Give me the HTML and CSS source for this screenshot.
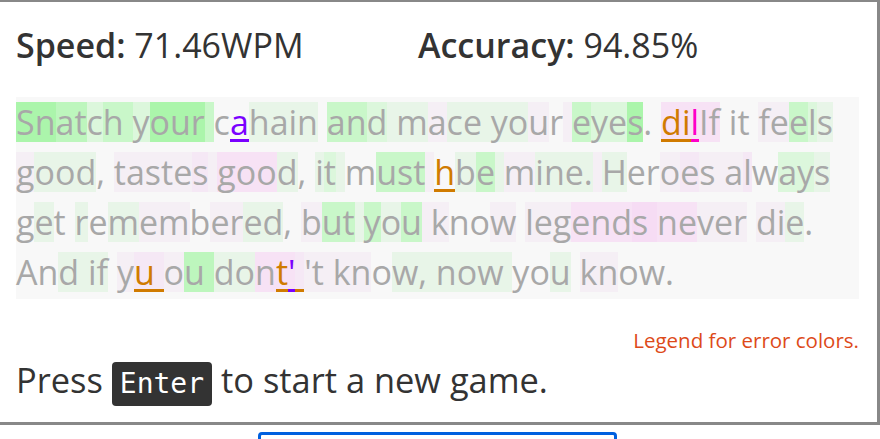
FILE: index.html
```html
<!DOCTYPE html>
<html lang="en">
<head>
<meta charset="utf-8">
<title>Typing game</title>
<link rel="stylesheet" href="styles.css">
</head>
<body>
<div class="frame">
  <div class="stats">
    <div class="stat"><b>Speed:</b> 71.46WPM</div>
    <div class="stat"><b>Accuracy:</b> 94.85%</div>
  </div>
  <div class="t"><span class="g1">Sn</span><span class="g1b">at</span><span class="g3">c</span><span class="g2">h </span><span class="g3">y</span><span class="g1">our</span><span class="g2"> </span>c<span class="e pu">a</span><span class="g4">hain</span> <span class="g2">an</span><span class="g3">d</span><span class="g4"> m</span><span class="p3">a</span><span class="g4">ce yo</span><span class="p3">u</span>r<span class="p3"> </span><span class="g2">e</span><span class="g3">ye</span><span class="g1">s</span>. <span class="e or p1">di</span><span class="e mg p1">l</span><span class="p1">If</span> it <span class="p3">fe</span><span class="g2">e</span><span class="g3">l</span><span class="g4">s</span>
<span class="p3">g</span><span class="g4">ood</span>, <span class="p3">taste</span><span class="p2">s</span><span class="p3"> </span><span class="p1">goo</span><span class="g4">d</span>, <span class="g4">i</span><span class="g3">t</span><span class="g4"> </span>m<span class="g2">ust</span><span class="p3"> </span><span class="e or">h</span><span class="g4">b</span><span class="g2">e</span><span class="g4"> </span><span class="p3">m</span><span class="g4">ine.</span><span class="p3"> </span><span class="g4">H</span>er<span class="p3">o</span><span class="p2">e</span><span class="p3">s a</span><span class="p2">l</span>w<span class="g3">ay</span><span class="g4">s</span>
g<span class="g4">e</span>t <span class="g4">r</span>e<span class="g4">m</span><span class="p3">em</span>b<span class="p3">er</span><span class="g4">ed</span>, <span class="p3">b</span><span class="g2">ut</span><span class="g4"> </span><span class="g2">y</span><span class="g4">o</span><span class="g2">u</span><span class="p3"> k</span>no<span class="p3">w</span> <span class="p3">leg</span><span class="p1">end</span><span class="p0">s </span><span class="p1">ne</span><span class="p3">ver</span> <span class="p3">di</span><span class="g4">e</span>.
An<span class="g4">d</span><span class="g4"> if</span> <span class="p3">y</span><span class="e or p2">u </span><span class="p3">o</span><span class="g1b">u </span><span class="g4">do</span><span class="p1">n</span><span class="e or p1">t</span><span class="e pu p1">'</span><span class="e or p2"> </span><span class="p3">'t kn</span>o<span class="g4">w, now </span>yo<span class="g4">u</span> <span class="p3">kn</span>ow.</div>
  <div class="legend">Legend for error colors.</div>
  <p class="press">Press <kbd class="key">Enter</kbd> to start a new game.</p>
</div>
<div class="field"></div>
</body>
</html>
```

FILE: styles.css
```css
html, body {
  margin: 0;
  padding: 0;
  background: #fff;
  overflow: hidden;
}

body {
  font-family: "Open Sans", "Noto Sans", sans-serif;
  color: #333;
}

.frame {
  box-sizing: border-box;
  width: 880px;
  height: 425px;
  border: 3px solid #888;
  border-left: none;
  border-top-width: 2px;
  padding: 20px 18px 0 16px;
}

.stats {
  display: grid;
  grid-template-columns: 402px auto;
  font-size: 34px;
  line-height: 46px;
}

.stat b {
  font-weight: 600;
}

.t {
  margin-top: 29px;
  padding-bottom: 2px;
  background: #f8f8f8;
  color: #a8a8a8;
  font-size: 34px;
  line-height: 50px;
}

.t span {
  background-image: linear-gradient(var(--c), var(--c));
  background-size: 100% 40px;
  background-position: 0 50%;
  background-repeat: no-repeat;
}

.t .e {
  --c: transparent;
  color: var(--u);
  background-image: linear-gradient(to bottom, var(--c) 0, var(--c) 37px, var(--u) 37px, var(--u) 40px);
}

.pu { --u: #7a00ff; }
.or { --u: #d07b00; }
.mg { --u: #ff00c8; }

.t .g1 { --c: #abf5ab; }
.t .g1b { --c: #bdf6bd; }
.t .g2 { --c: #c9f7c9; }
.t .g3 { --c: #dcf7dc; }
.t .g4 { --c: #e8f5e8; }
.t .p0 { --c: #f6dcf4; }
.t .p1 { --c: #f7e2f5; }
.t .p2 { --c: #f5e8f5; }
.t .p3 { --c: #f5eff5; }

.legend {
  margin-top: 27px;
  text-align: right;
  font-size: 20.5px;
  line-height: 28px;
  color: #dd4a1a;
}

.press {
  margin: 3px 0 0;
  font-size: 34.4px;
  line-height: 46px;
}

.key {
  font-family: "DejaVu Sans Mono", monospace;
  font-size: 28px;
  line-height: 1;
  background: #333;
  color: #fff;
  border-radius: 4px;
  padding: 5px 8px 6px;
}

.field {
  box-sizing: border-box;
  margin: 7px 0 0 258px;
  width: 359px;
  height: 40px;
  border: 3px solid #0060df;
  border-radius: 4px;
}
```
